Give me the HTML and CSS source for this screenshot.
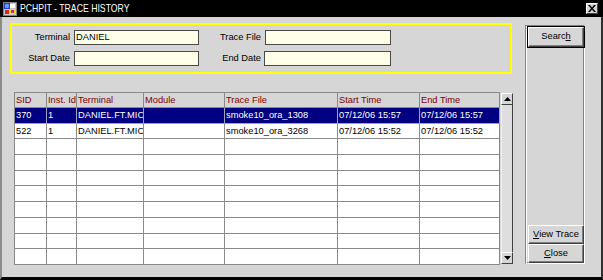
FILE: index.html
```html
<!DOCTYPE html>
<html>
<head>
<meta charset="utf-8">
<link rel="stylesheet" href="styles.css">
</head>
<body>
<div class="window">
  <div class="titlebar">
    <svg class="appicon" width="14" height="14" viewBox="0 0 14 14">
      <rect x="0.5" y="0.5" width="13" height="13" fill="#c8c8c8" stroke="#808080"/>
      <rect x="1" y="1" width="6" height="6" fill="#2040c0"/>
      <circle cx="4" cy="4" r="2.2" fill="#60a0ff"/>
      <rect x="7" y="2" width="5" height="4" fill="#ffffff"/>
      <rect x="2" y="8" width="4" height="4" fill="#e02020"/>
      <rect x="7" y="7" width="5" height="5" fill="#f0e020"/>
      <rect x="8" y="8" width="3" height="3" fill="#d02080"/>
    </svg>
    <span class="title">PCHPIT - TRACE HISTORY</span>
    <div class="xbtn">
      <svg width="8" height="7" viewBox="0 0 8 7"><path d="M0 0h2l2 2.5 2-2.5h2l-3 3.5 3 3.5h-2l-2-2.5-2 2.5h-2l3-3.5z" fill="#000"/></svg>
    </div>
  </div>
  <div class="body">
    <div class="main">
      <div class="criteria">
        <div class="label">Terminal</div>
        <div class="field">DANIEL</div>
        <div class="label">Trace File</div>
        <div class="field"></div>
        <div class="label">Start Date</div>
        <div class="field"></div>
        <div class="label">End Date</div>
        <div class="field field-end"></div>
      </div>
      <div class="results">
        <div class="table">
          <div class="row head">
            <div class="cell">SID</div><div class="cell">Inst. Id</div><div class="cell">Terminal</div><div class="cell">Module</div><div class="cell">Trace File</div><div class="cell">Start Time</div><div class="cell">End Time</div>
          </div>
          <div class="row sel">
            <div class="cell">370</div><div class="cell">1</div><div class="cell">DANIEL.FT.MICROS</div><div class="cell"></div><div class="cell">smoke10_ora_1308</div><div class="cell">07/12/06 15:57</div><div class="cell">07/12/06 15:57</div>
          </div>
          <div class="row">
            <div class="cell">522</div><div class="cell">1</div><div class="cell">DANIEL.FT.MICROS</div><div class="cell"></div><div class="cell">smoke10_ora_3268</div><div class="cell">07/12/06 15:52</div><div class="cell">07/12/06 15:52</div>
          </div>
          <div class="row"><div class="cell"></div><div class="cell"></div><div class="cell"></div><div class="cell"></div><div class="cell"></div><div class="cell"></div><div class="cell"></div></div>
          <div class="row"><div class="cell"></div><div class="cell"></div><div class="cell"></div><div class="cell"></div><div class="cell"></div><div class="cell"></div><div class="cell"></div></div>
          <div class="row"><div class="cell"></div><div class="cell"></div><div class="cell"></div><div class="cell"></div><div class="cell"></div><div class="cell"></div><div class="cell"></div></div>
          <div class="row"><div class="cell"></div><div class="cell"></div><div class="cell"></div><div class="cell"></div><div class="cell"></div><div class="cell"></div><div class="cell"></div></div>
          <div class="row"><div class="cell"></div><div class="cell"></div><div class="cell"></div><div class="cell"></div><div class="cell"></div><div class="cell"></div><div class="cell"></div></div>
          <div class="row"><div class="cell"></div><div class="cell"></div><div class="cell"></div><div class="cell"></div><div class="cell"></div><div class="cell"></div><div class="cell"></div></div>
          <div class="row"><div class="cell"></div><div class="cell"></div><div class="cell"></div><div class="cell"></div><div class="cell"></div><div class="cell"></div><div class="cell"></div></div>
          <div class="row"><div class="cell"></div><div class="cell"></div><div class="cell"></div><div class="cell"></div><div class="cell"></div><div class="cell"></div><div class="cell"></div></div>
        </div>
        <div class="scrollbar">
          <div class="sbtn"><svg width="7" height="4" viewBox="0 0 7 4"><path d="M3.5 0L7 4H0z" fill="#000"/></svg></div>
          <div class="track"></div>
          <div class="sbtn"><svg width="7" height="4" viewBox="0 0 7 4"><path d="M0 0h7L3.5 4z" fill="#000"/></svg></div>
        </div>
      </div>
    </div>
    <div class="side">
      <div class="btn default">Searc<u>h</u></div>
      <div class="btn view"><u>V</u>iew Trace</div>
      <div class="btn"><u>C</u>lose</div>
    </div>
  </div>
</div>
</body>
</html>
```
FILE: styles.css
```css
html, body {
  margin: 0;
  padding: 0;
  background: #d6d6d6;
}
.window {
  width: 603px;
  height: 280px;
  display: flex;
  flex-direction: column;
  font-family: "Liberation Sans", Arial, sans-serif;
  font-size: 9.3px;
  color: #000;
  overflow: hidden;
}
.titlebar {
  height: 17px;
  flex: none;
  background: #000;
  display: flex;
  align-items: center;
  padding-left: 3px;
}
.appicon {
  flex: none;
  display: block;
}
.title {
  margin-left: 3px;
  color: #fff;
  font-family: "Liberation Sans", Arial, sans-serif;
  font-size: 11px;
  line-height: 17px;
  white-space: nowrap;
  display: inline-block;
  width: 110px;
  transform: scaleX(0.79);
  transform-origin: left center;
}
.xbtn {
  margin-left: auto;
  margin-right: 5px;
  width: 12px;
  height: 11px;
  box-sizing: border-box;
  background: #d6d6d6;
  border: 1px solid;
  border-color: #fff #404040 #404040 #fff;
  display: flex;
  align-items: center;
  justify-content: center;
}
.xbtn svg { display: block; }
.body {
  flex: 1;
  display: flex;
  border-left: 2px solid #8c8c8c;
  border-right: 2px solid #303030;
  border-bottom: 3px solid #000;
  min-height: 0;
}
.main {
  margin-left: 8px;
  width: 503px;
  padding-top: 6px;
}
.criteria {
  box-sizing: border-box;
  width: 502px;
  height: 51px;
  border: 2px solid #ffff00;
  padding-top: 5px;
  display: grid;
  grid-template-columns: 58px 125px 58px 126px;
  grid-auto-rows: 15px;
  column-gap: 4px;
  row-gap: 6px;
  align-content: start;
}
.label {
  text-align: right;
  line-height: 15px;
  white-space: nowrap;
}
.field {
  box-sizing: border-box;
  height: 15px;
  background: #ffffe8;
  border: 1px solid #4a4a4a;
  padding-left: 1px;
  line-height: 13px;
}
.field-end {
  margin-left: -1px;
}
.results {
  margin-top: 18px;
  margin-left: 4px;
  display: flex;
  align-items: flex-start;
}
.table {
  border-left: 1px solid #8a8a8a;
  border-top: 1px solid #8a8a8a;
  background: #fff;
}
.row {
  display: grid;
  grid-template-columns: 32px 30px 67px 81px 113px 82px 80px;
  height: 15.7px;
}
.row.head {
  height: 15px;
  background: #d6d6d6;
  color: #800000;
}
.row.sel {
  background: #000080;
  color: #fff;
}
.cell {
  box-sizing: border-box;
  border-right: 1px solid #8a8a8a;
  border-bottom: 1px solid #8a8a8a;
  padding-left: 1px;
  white-space: nowrap;
  overflow: hidden;
  line-height: 14px;
}
.row.sel .cell {
  border-right-color: #a0a0c0;
  border-bottom-color: #a0a0c0;
}
.scrollbar {
  margin-left: 1px;
  margin-top: 1px;
  width: 12px;
  height: 171px;
  display: flex;
  flex-direction: column;
}
.sbtn {
  flex: none;
  box-sizing: border-box;
  height: 12px;
  background: #d6d6d6;
  border: 1px solid;
  border-color: #fff #404040 #404040 #fff;
  display: flex;
  align-items: center;
  justify-content: center;
}
.sbtn svg { display: block; }
.track {
  flex: 1;
  background: #dedede;
  border-right: 1px solid #404040;
  border-left: 1px solid #f0f0f0;
}
.side {
  margin-left: 12px;
  margin-top: 8px;
  width: 60px;
  height: 239px;
  box-sizing: border-box;
  border: 1px solid;
  border-color: #808080 #fff #fff #808080;
  box-shadow: inset 1px 1px #fff, inset -1px -1px #808080;
  padding: 1px 0 0 2px;
  display: flex;
  flex-direction: column;
}
.btn {
  box-sizing: border-box;
  width: 56px;
  height: 19px;
  background: #d6d6d6;
  border: 1px solid;
  border-color: #fff #404040 #404040 #fff;
  box-shadow: inset -1px -1px #808080;
  text-align: center;
  line-height: 16px;
  white-space: nowrap;
}
.btn.default {
  height: 20px;
  outline: 1px solid #000;
  outline-offset: 0;
  border-color: #fff #404040 #404040 #fff;
}
.btn.view {
  margin-top: auto;
}
```
